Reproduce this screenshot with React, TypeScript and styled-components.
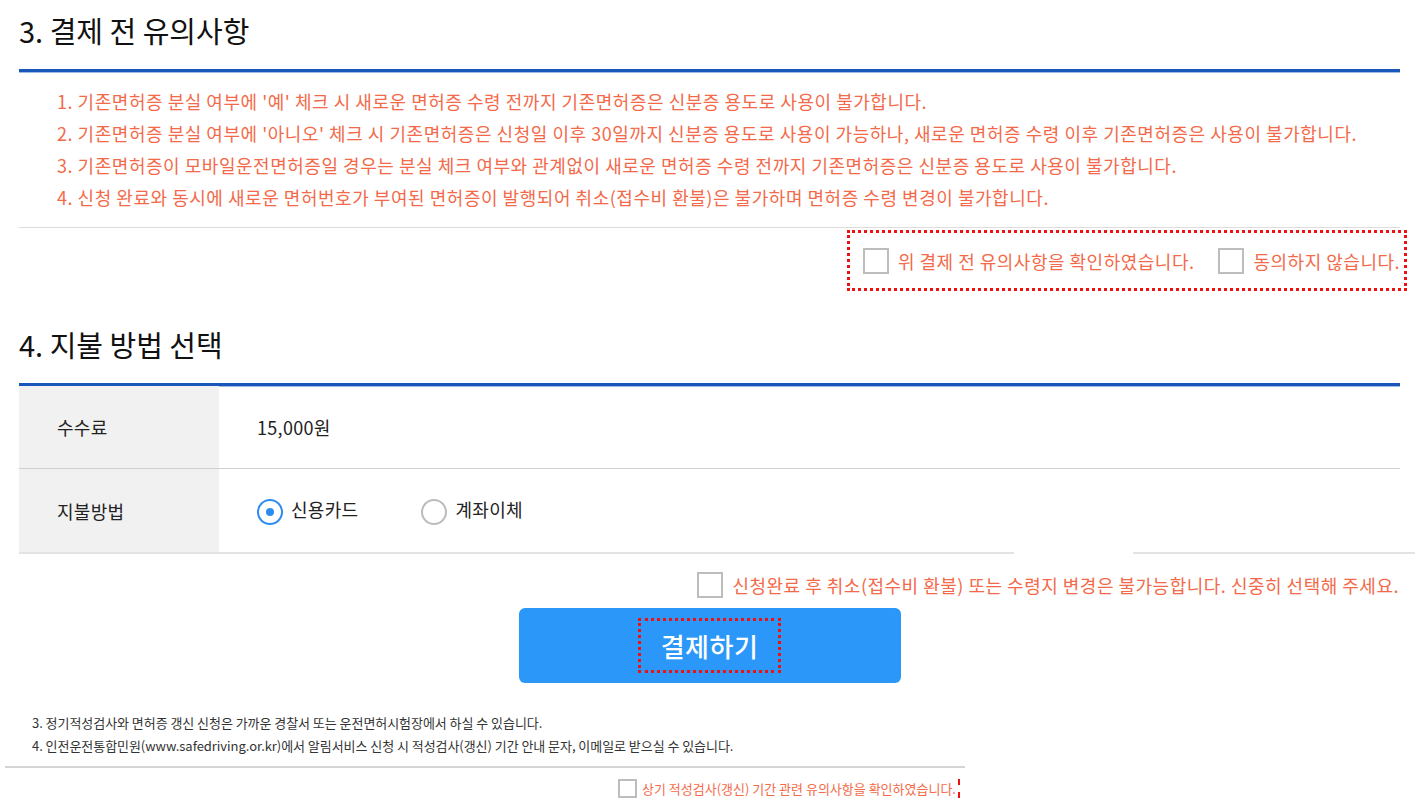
import React from 'react';
import styled, { createGlobalStyle, css } from 'styled-components';

const GlobalStyle = createGlobalStyle`
  html, body {
    margin: 0;
    padding: 0;
    background: #fff;
    font-family: "Noto Sans CJK KR", "Noto Sans", sans-serif;
    color: #222;
  }
  * { box-sizing: border-box; }
`;

const coral = '#f36a4a';

const Page = styled.div`
  width: 1415px;
  overflow: hidden;
`;

const Content = styled.div`
  margin-left: 19px;
  width: 1381px;
`;

const SectionTitle = styled.h2<{ $first?: boolean }>`
  margin: ${({ $first }) => ($first ? '10px' : '33px')} 0 0;
  font-size: 29px;
  line-height: 40px;
  font-weight: 400;
  color: #111;
  padding-bottom: 19px;
  border-bottom: 3px solid #1856b9;
  box-shadow: 0 1px 0 #9dbbe6;
`;

const NoticeList = styled.ol`
  list-style: none;
  margin: 0;
  padding: 13px 0 14px 38px;
  border-bottom: 1px solid #dcdcdc;
`;

const NoticeItem = styled.li`
  font-size: 18px;
  letter-spacing: 0.53px;
  line-height: 32px;
  color: ${coral};
  white-space: nowrap;
`;

const AgreeRow = styled.div`
  display: flex;
  justify-content: flex-end;
  margin-right: -7px;
  padding-top: 2px;
`;

const DashedBox = styled.div`
  display: flex;
  align-items: center;
  gap: 24px;
  height: 61px;
  padding: 0 4px 0 13px;
  border: 3px dotted #ee1111;
`;

const CheckLabel = styled.label<{ $size?: 'small' }>`
  display: inline-flex;
  align-items: center;
  gap: ${({ $size }) => ($size ? '5px' : '9px')};
  font-size: ${({ $size }) => ($size ? '13px' : '18px')};
  letter-spacing: ${({ $size }) => ($size ? '0' : '0.5px')};
  color: ${coral};
  white-space: nowrap;
`;

const Box = styled.span<{ $size?: number }>`
  display: inline-block;
  width: ${({ $size }) => $size ?? 26}px;
  height: ${({ $size }) => $size ?? 26}px;
  border: 2px solid #bdbdbd;
  background: #fff;
  flex: none;
`;

const Table = styled.div`
  display: grid;
  grid-template-columns: 200px 1fr;
`;

const cellBase = css`
  height: 83px;
  display: flex;
  align-items: center;
  padding-left: 38px;
  font-size: 18px;
  letter-spacing: 0.3px;
  color: #222;
`;

const HeadCell = styled.div<{ $divider?: boolean }>`
  ${cellBase};
  background: #f1f1f1;
  border-bottom: ${({ $divider }) => ($divider ? '1px solid #cfcfcf' : 'none')};
`;

const ValueCell = styled.div<{ $divider?: boolean }>`
  ${cellBase};
  gap: 63px;
  border-bottom: ${({ $divider }) => ($divider ? '1px solid #cfcfcf' : 'none')};
`;

const TableBottom = styled.div`
  position: relative;
  height: 2px;
  width: 1396px;
  background: #e3e3e3;
`;

const Gap = styled.span`
  position: absolute;
  left: 995px;
  top: 0;
  width: 119px;
  height: 2px;
  background: #fff;
`;

const Radio = styled.label`
  display: inline-flex;
  align-items: center;
  gap: 8px;
  margin-top: -3px;
`;

const RadioCircle = styled.span<{ $checked?: boolean }>`
  width: 26px;
  height: 26px;
  border-radius: 50%;
  border: 2px solid ${({ $checked }) => ($checked ? '#2d8cf0' : '#bcbcbc')};
  display: inline-flex;
  align-items: center;
  justify-content: center;
  margin-top: 6px;
  &::after {
    content: '';
    display: ${({ $checked }) => ($checked ? 'block' : 'none')};
    width: 8px;
    height: 8px;
    border-radius: 50%;
    background: #2d8cf0;
  }
`;

const ConfirmRow = styled.div`
  display: flex;
  justify-content: flex-end;
  padding-top: 18px;
  margin-right: 1px;
`;

const ButtonRow = styled.div`
  display: flex;
  justify-content: center;
  padding-top: 10px;
`;

const PayButton = styled.button`
  width: 382px;
  height: 75px;
  border: none;
  border-radius: 6px;
  background: #2b97f8;
  display: flex;
  align-items: center;
  justify-content: center;
  cursor: pointer;
  font-family: inherit;
`;

const PayLabel = styled.span`
  display: inline-block;
  padding: 0 20px;
  height: 55px;
  line-height: 49px;
  border: 3px dotted #ee1111;
  color: #fff;
  font-size: 26px;
  letter-spacing: 0.5px;
  font-weight: 500;
`;

const BottomPanel = styled.div`
  margin-left: 5px;
  width: 960px;
  margin-top: 28px;
`;

const NoteList = styled.ul`
  list-style: none;
  margin: 0;
  padding: 0 0 9px 27px;
  border-bottom: 2px solid #d4d4d4;
`;

const NoteItem = styled.li`
  font-size: 13px;
  letter-spacing: -0.05px;
  line-height: 23px;
  color: #333;
  white-space: nowrap;
`;

const BottomCheck = styled.div`
  display: flex;
  justify-content: flex-end;
  padding-top: 11px;
  margin-right: 5px;
`;

const ClipText = styled.span`
  padding-right: 2px;
  border-right: 2px dashed #ee1111;
`;

const notices = [
  "1. 기존면허증 분실 여부에 '예' 체크 시 새로운 면허증 수령 전까지 기존면허증은 신분증 용도로 사용이 불가합니다.",
  "2. 기존면허증 분실 여부에 '아니오' 체크 시 기존면허증은 신청일 이후 30일까지 신분증 용도로 사용이 가능하나, 새로운 면허증 수령 이후 기존면허증은 사용이 불가합니다.",
  '3. 기존면허증이 모바일운전면허증일 경우는 분실 체크 여부와 관계없이 새로운 면허증 수령 전까지 기존면허증은 신분증 용도로 사용이 불가합니다.',
  '4. 신청 완료와 동시에 새로운 면허번호가 부여된 면허증이 발행되어 취소(접수비 환불)은 불가하며 면허증 수령 변경이 불가합니다.',
];

const notes = [
  '3. 정기적성검사와 면허증 갱신 신청은 가까운 경찰서 또는 운전면허시험장에서 하실 수 있습니다.',
  '4. 인전운전통합민원(www.safedriving.or.kr)에서 알림서비스 신청 시 적성검사(갱신) 기간 안내 문자, 이메일로 받으실 수 있습니다.',
];

export default function App() {
  return (
    <Page>
      <GlobalStyle />
      <Content>
        <SectionTitle $first>3. 결제 전 유의사항</SectionTitle>
        <NoticeList>
          {notices.map((n) => (
            <NoticeItem key={n}>{n}</NoticeItem>
          ))}
        </NoticeList>
        <AgreeRow>
          <DashedBox>
            <CheckLabel>
              <Box />
              위 결제 전 유의사항을 확인하였습니다.
            </CheckLabel>
            <CheckLabel>
              <Box />
              동의하지 않습니다.
            </CheckLabel>
          </DashedBox>
        </AgreeRow>

        <SectionTitle>4. 지불 방법 선택</SectionTitle>
        <Table>
          <HeadCell $divider>수수료</HeadCell>
          <ValueCell $divider>15,000원</ValueCell>
          <HeadCell>지불방법</HeadCell>
          <ValueCell>
            <Radio>
              <RadioCircle $checked />
              신용카드
            </Radio>
            <Radio>
              <RadioCircle />
              계좌이체
            </Radio>
          </ValueCell>
        </Table>
        <TableBottom>
          <Gap />
        </TableBottom>

        <ConfirmRow>
          <CheckLabel>
            <Box />
            신청완료 후 취소(접수비 환불) 또는 수령지 변경은 불가능합니다. 신중히 선택해 주세요.
          </CheckLabel>
        </ConfirmRow>

        <ButtonRow>
          <PayButton type="button">
            <PayLabel>결제하기</PayLabel>
          </PayButton>
        </ButtonRow>
      </Content>

      <BottomPanel>
        <NoteList>
          {notes.map((n) => (
            <NoteItem key={n}>{n}</NoteItem>
          ))}
        </NoteList>
        <BottomCheck>
          <CheckLabel $size="small">
            <Box $size={19} />
            <ClipText>상기 적성검사(갱신) 기간 관련 유의사항을 확인하였습니다.</ClipText>
          </CheckLabel>
        </BottomCheck>
      </BottomPanel>
    </Page>
  );
}
